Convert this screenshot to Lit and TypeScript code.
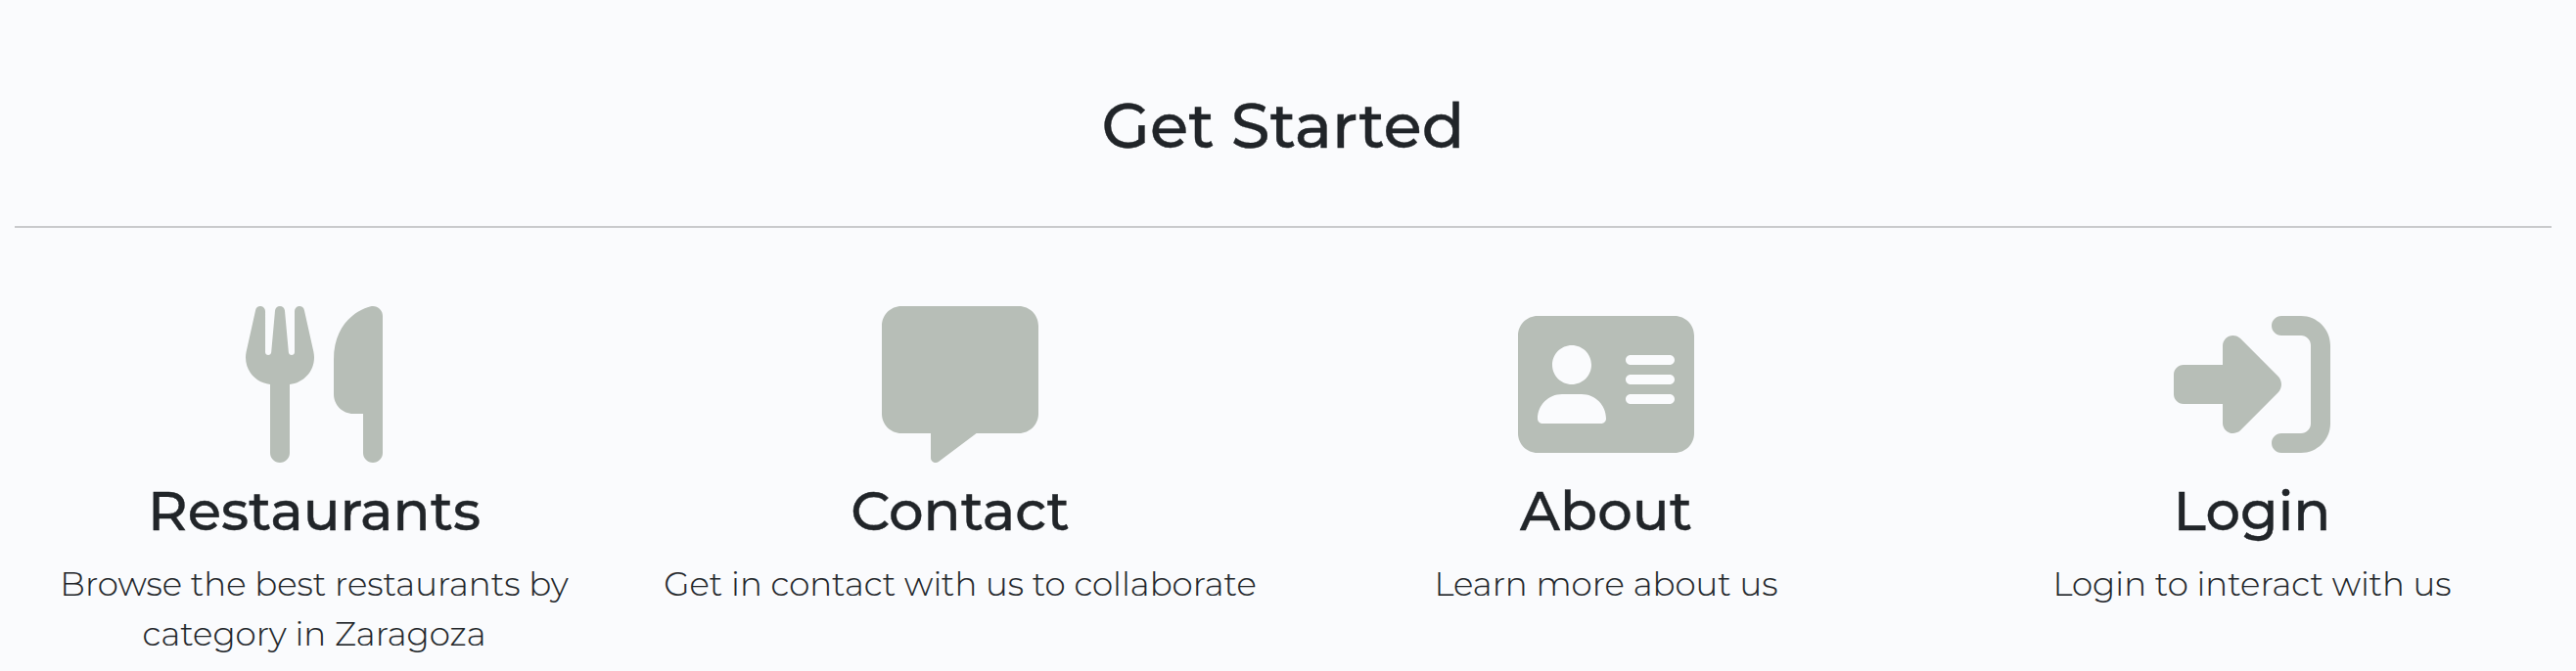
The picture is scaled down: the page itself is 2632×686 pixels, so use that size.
import { LitElement, html, css } from "lit";

interface Feature {
  title: string;
  text: string;
  width: number;
  path: string;
}

const features: Feature[] = [
  {
    title: "Restaurants",
    text: "Browse the best restaurants by category in Zaragoza",
    width: 448,
    path: "M416 0C400 0 288 32 288 176V288c0 35.3 28.7 64 64 64h32V480c0 17.7 14.3 32 32 32s32-14.3 32-32V352 240 32c0-17.7-14.3-32-32-32zM64 16C64 7.8 57.9 1 49.7 .1S34.2 4.6 32.4 12.5L2.1 148.8C.7 155.1 0 161.5 0 167.9c0 45.9 35.1 83.6 80 87.7V480c0 17.7 14.3 32 32 32s32-14.3 32-32V255.6c44.9-4.1 80-41.8 80-87.7c0-6.4-.7-12.8-2.1-19.1L191.6 12.5c-1.8-8-9.3-13.3-17.4-12.4S160 7.8 160 16V150.2c0 5.4-4.4 9.8-9.8 9.8c-5.1 0-9.3-3.9-9.8-9L127.9 14.6C127.2 6.3 120.3 0 112 0s-15.2 6.3-15.9 14.6L83.7 151c-.5 5.1-4.7 9-9.8 9c-5.4 0-9.8-4.4-9.8-9.8V16z",
  },
  {
    title: "Contact",
    text: "Get in contact with us to collaborate",
    width: 512,
    path: "M64 0C28.7 0 0 28.7 0 64V352c0 35.3 28.7 64 64 64h96v80c0 6.1 3.4 11.6 8.8 14.3s11.9 2.1 16.8-1.5L309.3 416H448c35.3 0 64-28.7 64-64V64c0-35.3-28.7-64-64-64H64z",
  },
  {
    title: "About",
    text: "Learn more about us",
    width: 576,
    path: "M64 32C28.7 32 0 60.7 0 96V416c0 35.3 28.7 64 64 64H512c35.3 0 64-28.7 64-64V96c0-35.3-28.7-64-64-64H64zm80 256h64c44.2 0 80 35.8 80 80c0 8.8-7.2 16-16 16H80c-8.8 0-16-7.2-16-16c0-44.2 35.8-80 80-80zm96-96c0 35.3-28.7 64-64 64s-64-28.7-64-64s28.7-64 64-64s64 28.7 64 64zm128-32H496c8.8 0 16 7.2 16 16s-7.2 16-16 16H368c-8.8 0-16-7.2-16-16s7.2-16 16-16zm0 64H496c8.8 0 16 7.2 16 16s-7.2 16-16 16H368c-8.8 0-16-7.2-16-16s7.2-16 16-16zm0 64H496c8.8 0 16 7.2 16 16s-7.2 16-16 16H368c-8.8 0-16-7.2-16-16s7.2-16 16-16z",
  },
  {
    title: "Login",
    text: "Login to interact with us",
    width: 512,
    path: "M217.9 105.900L340.700 228.700c7.200 7.200 11.300 17.100 11.300 27.300s-4.100 20.100-11.300 27.300L217.900 406.100c-6.400 6.400-15 9.900-24 9.900c-18.700 0-33.900-15.200-33.900-33.900l0-62.100L32 320c-17.700 0-32-14.300-32-32l0-64c0-17.700 14.300-32 32-32l128 0 0-62.100c0-18.700 15.200-33.900 33.900-33.900c9 0 17.600 3.600 24 9.900zM352 416l64 0c17.700 0 32-14.300 32-32l0-256c0-17.700-14.300-32-32-32l-64 0c-17.700 0-32-14.300-32-32s14.300-32 32-32l64 0c53 0 96 43 96 96l0 256c0 53-43 96-96 96l-64 0c-17.700 0-32-14.300-32-32s14.300-32 32-32z",
  },
];

class FeatureCard extends LitElement {
  static properties = { feature: { attribute: false } };
  declare feature: Feature;

  static styles = css`
    :host {
      display: flex;
      flex-direction: column;
      align-items: center;
      padding: 0 24px;
      text-align: center;
    }
    .icon {
      display: block;
      height: 160px;
      fill: #b7beb7;
    }
    .title {
      margin: 16px 0;
      font-size: 56px;
      font-weight: 500;
      line-height: 1.2;
      -webkit-text-stroke: 0.4px currentColor;
    }
    .text {
      margin: 0;
      font-size: 34px;
      font-weight: 300;
      line-height: 1.5;
      -webkit-text-stroke: 0.15px currentColor;
    }
  `;

  render() {
    const { title, text, width, path } = this.feature;
    return html`
      <svg class="icon" viewBox="0 0 ${width} 512" aria-hidden="true">
        <path d=${path}></path>
      </svg>
      <h3 class="title">${title}</h3>
      <p class="text">${text}</p>
    `;
  }
}
customElements.define("feature-card", FeatureCard);

class AppRoot extends LitElement {
  static styles = css`
    :host {
      display: block;
      box-sizing: border-box;
      height: 686px;
      overflow: hidden;
      padding-top: 90px;
      background: #fafbfd;
      color: #212529;
      font-family: Montserrat, sans-serif;
    }
    .heading {
      width: 2622px;
      height: 77px;
      margin: 0;
      font-size: 64px;
      font-weight: 500;
      line-height: 76.8px;
      text-align: center;
      -webkit-text-stroke: 0.4px currentColor;
    }
    .rule {
      width: 2592px;
      height: 2px;
      margin: 64px 0 80px 15px;
      border: 0;
      background: #c9cacc;
    }
    .row {
      display: grid;
      grid-template-columns: repeat(4, 660px);
      margin-left: -9px;
    }
  `;

  render() {
    return html`
      <h2 class="heading">Get Started</h2>
      <hr class="rule" />
      <div class="row">
        ${features.map((f) => html`<feature-card .feature=${f}></feature-card>`)}
      </div>
    `;
  }
}
customElements.define("app-root", AppRoot);
